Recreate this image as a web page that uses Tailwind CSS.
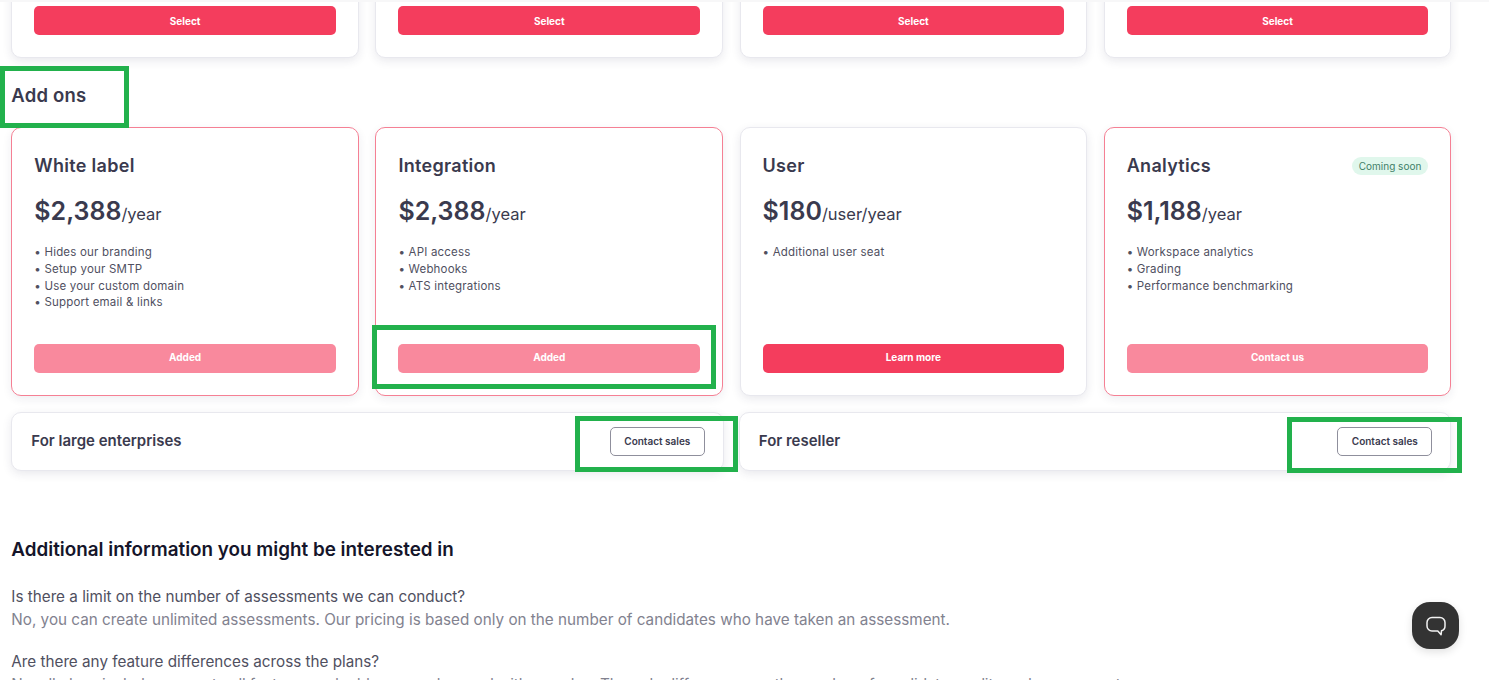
<!DOCTYPE html>
<html lang="en">
<head>
  <meta charset="UTF-8">
  <title>Pricing — Add ons</title>
  <script src="https://cdn.jsdelivr.net/npm/@tailwindcss/browser@4"></script>
</head>
<body class="relative h-[680px] overflow-hidden bg-white font-['Inter',sans-serif] text-[#3a3a4e]">

  <main class="ml-[11.3px] w-[1440px] -mt-[100px]">
    <!-- Plans (scrolled off the top) -->
    <section class="grid grid-cols-4 gap-x-[16.5px]">
      <div class="h-[158px] flex flex-col justify-end rounded-[10px] bg-white border border-[#e8e8ee] shadow-[0_3px_10px_rgba(40,40,80,0.1)] px-[22px] pb-[22px]">
        <button class="h-[29px] pt-[1px] rounded-[5px] bg-[#f43d5d] text-white text-[10px] font-bold">Select</button>
      </div>
      <div class="h-[158px] flex flex-col justify-end rounded-[10px] bg-white border border-[#e8e8ee] shadow-[0_3px_10px_rgba(40,40,80,0.1)] px-[22px] pb-[22px]">
        <button class="h-[29px] pt-[1px] rounded-[5px] bg-[#f43d5d] text-white text-[10px] font-bold">Select</button>
      </div>
      <div class="h-[158px] flex flex-col justify-end rounded-[10px] bg-white border border-[#e8e8ee] shadow-[0_3px_10px_rgba(40,40,80,0.1)] px-[22px] pb-[22px]">
        <button class="h-[29px] pt-[1px] rounded-[5px] bg-[#f43d5d] text-white text-[10px] font-bold">Select</button>
      </div>
      <div class="h-[158px] flex flex-col justify-end rounded-[10px] bg-white border border-[#e8e8ee] shadow-[0_3px_10px_rgba(40,40,80,0.1)] px-[22px] pb-[22px]">
        <button class="h-[29px] pt-[1px] rounded-[5px] bg-[#f43d5d] text-white text-[10px] font-bold">Select</button>
      </div>
    </section>

    <h2 class="h-[69px] pt-[6px] flex items-center text-[18.5px] font-semibold tracking-[0.2px]">Add ons</h2>

    <!-- Add on cards -->
    <section class="grid grid-cols-4 gap-x-[16.5px]">
      <div class="h-[269px] flex flex-col rounded-[10px] bg-white border border-[#f58094] shadow-[0_3px_10px_rgba(40,40,80,0.08)] px-[22px] pt-[26px] pb-[22px]">
        <h3 class="h-[24px] leading-[24px] text-[18px] font-semibold tracking-[0.3px]">White label</h3>
        <p class="mt-[17px] h-[32px] leading-[32px] text-[25px] font-semibold">$2,388<span class="text-[16.5px] font-normal">/year</span></p>
        <ul class="mt-[17px] flex-1 text-[11.5px] leading-[16.8px] text-[#50505f] tracking-[0.2px]">
          <li>• Hides our branding</li>
          <li>• Setup your SMTP</li>
          <li>• Use your custom domain</li>
          <li>• Support email &amp; links</li>
        </ul>
        <button class="h-[29px] pb-[2px] rounded-[5px] bg-[#f9899d] text-white text-[10px] font-bold">Added</button>
      </div>

      <div class="h-[269px] flex flex-col rounded-[10px] bg-white border border-[#f58094] shadow-[0_3px_10px_rgba(40,40,80,0.08)] px-[22px] pt-[26px] pb-[22px]">
        <h3 class="h-[24px] leading-[24px] text-[18px] font-semibold tracking-[0.3px]">Integration</h3>
        <p class="mt-[17px] h-[32px] leading-[32px] text-[25px] font-semibold">$2,388<span class="text-[16.5px] font-normal">/year</span></p>
        <ul class="mt-[17px] flex-1 text-[11.5px] leading-[16.8px] text-[#50505f] tracking-[0.2px]">
          <li>• API access</li>
          <li>• Webhooks</li>
          <li>• ATS integrations</li>
        </ul>
        <button class="h-[29px] pb-[2px] rounded-[5px] bg-[#f9899d] text-white text-[10px] font-bold">Added</button>
      </div>

      <div class="h-[269px] flex flex-col rounded-[10px] bg-white border border-[#e8e8ee] shadow-[0_3px_10px_rgba(40,40,80,0.1)] px-[22px] pt-[26px] pb-[22px]">
        <h3 class="h-[24px] leading-[24px] text-[18px] font-semibold tracking-[0.3px]">User</h3>
        <p class="mt-[17px] h-[32px] leading-[32px] text-[25px] font-semibold">$180<span class="text-[16.5px] font-normal">/user/year</span></p>
        <ul class="mt-[17px] flex-1 text-[11.5px] leading-[16.8px] text-[#50505f] tracking-[0.2px]">
          <li>• Additional user seat</li>
        </ul>
        <button class="h-[29px] pb-[2px] rounded-[5px] bg-[#f43d5d] text-white text-[10px] font-bold">Learn more</button>
      </div>

      <div class="h-[269px] flex flex-col rounded-[10px] bg-white border border-[#f58094] shadow-[0_3px_10px_rgba(40,40,80,0.08)] px-[22px] pt-[26px] pb-[22px]">
        <div class="flex items-center justify-between">
          <h3 class="h-[24px] leading-[24px] text-[18px] font-semibold tracking-[0.3px]">Analytics</h3>
          <span class="h-[18px] leading-[18px] rounded-full bg-[#e0f7ec] px-[7px] text-[10px] text-[#3f7f68]">Coming soon</span>
        </div>
        <p class="mt-[17px] h-[32px] leading-[32px] text-[25px] font-semibold">$1,188<span class="text-[16.5px] font-normal">/year</span></p>
        <ul class="mt-[17px] flex-1 text-[11.5px] leading-[16.8px] text-[#50505f] tracking-[0.2px]">
          <li>• Workspace analytics</li>
          <li>• Grading</li>
          <li>• Performance benchmarking</li>
        </ul>
        <button class="h-[29px] pb-[2px] rounded-[5px] bg-[#f9899d] text-white text-[10px] font-bold">Contact us</button>
      </div>
    </section>

    <!-- Enterprise / reseller -->
    <section class="mt-[16px] grid grid-cols-2 gap-x-[15px]">
      <div class="h-[59px] flex items-center justify-between rounded-[10px] bg-white border border-[#e8e8ee] shadow-[0_3px_10px_rgba(40,40,80,0.1)] pl-[19px] pr-[18px]">
        <span class="-mt-[1px] text-[15px] font-semibold">For large enterprises</span>
        <button class="w-[95px] h-[29px] rounded-[5px] border border-[#8f8f9c] text-[10px] font-semibold">Contact sales</button>
      </div>
      <div class="h-[59px] flex items-center justify-between rounded-[10px] bg-white border border-[#e8e8ee] shadow-[0_3px_10px_rgba(40,40,80,0.1)] pl-[19px] pr-[18px]">
        <span class="-mt-[1px] text-[15px] font-semibold">For reseller</span>
        <button class="w-[95px] h-[29px] rounded-[5px] border border-[#8f8f9c] text-[10px] font-semibold">Contact sales</button>
      </div>
    </section>

    <!-- FAQ -->
    <section class="mt-[66px]">
      <h2 class="h-[26px] leading-[26px] text-[18.85px] font-semibold text-[#15152a]">Additional information you might be interested in</h2>
      <p class="mt-[23px] h-[23px] leading-[22px] text-[15.25px] text-[#50505f]">Is there a limit on the number of assessments we can conduct?</p>
      <p class="h-[22px] leading-[22px] text-[15.25px] text-[#82828f]">No, you can create unlimited assessments. Our pricing is based only on the number of candidates who have taken an assessment.</p>
      <p class="mt-[20px] h-[23px] leading-[22px] text-[15.25px] text-[#50505f]">Are there any feature differences across the plans?</p>
      <p class="h-[22px] leading-[22px] text-[15.25px] tracking-[-0.125px] text-[#82828f] whitespace-nowrap">No, all plans include access to all features and add-ons can be used with any plan. The only difference was the number of candidate credits and assessments.</p>
    </section>
  </main>

  <!-- Top edge shadow -->
  <div class="absolute left-0 top-0 w-full h-[2px] bg-[#f7f7f8]"></div>

  <!-- Chat launcher -->
  <button class="absolute left-[1412px] top-[602px] w-[47px] h-[47px] flex items-center justify-center rounded-[18px] bg-[#333333] shadow-[0_3px_8px_rgba(0,0,0,0.12)]">
    <svg class="w-[22px] h-[22px]" viewBox="0 0 22 22" fill="none" stroke="#f2f2f2" stroke-width="1.5" stroke-linejoin="round">
      <path d="M7 2.5h8a5 5 0 0 1 5 5v3.5a5 5 0 0 1-3.5 4.8l-.4 4-3.300-3.800H7a5 5 0 0 1-5-5V7.500a5 5 0 0 1 5-5z"/>
    </svg>
  </button>

  <!-- Green annotation boxes -->
  <div class="absolute left-0 top-[66px] w-[129px] h-[62px] border-[5px] border-[#22b14c]"></div>
  <div class="absolute left-[372px] top-[325px] w-[344px] h-[64px] border-[5px] border-[#22b14c]"></div>
  <div class="absolute left-[575px] top-[416px] w-[163px] h-[56px] border-[5px] border-[#22b14c]"></div>
  <div class="absolute left-[1287px] top-[417px] w-[175px] h-[56px] border-[5px] border-[#22b14c]"></div>
</body>
</html>
